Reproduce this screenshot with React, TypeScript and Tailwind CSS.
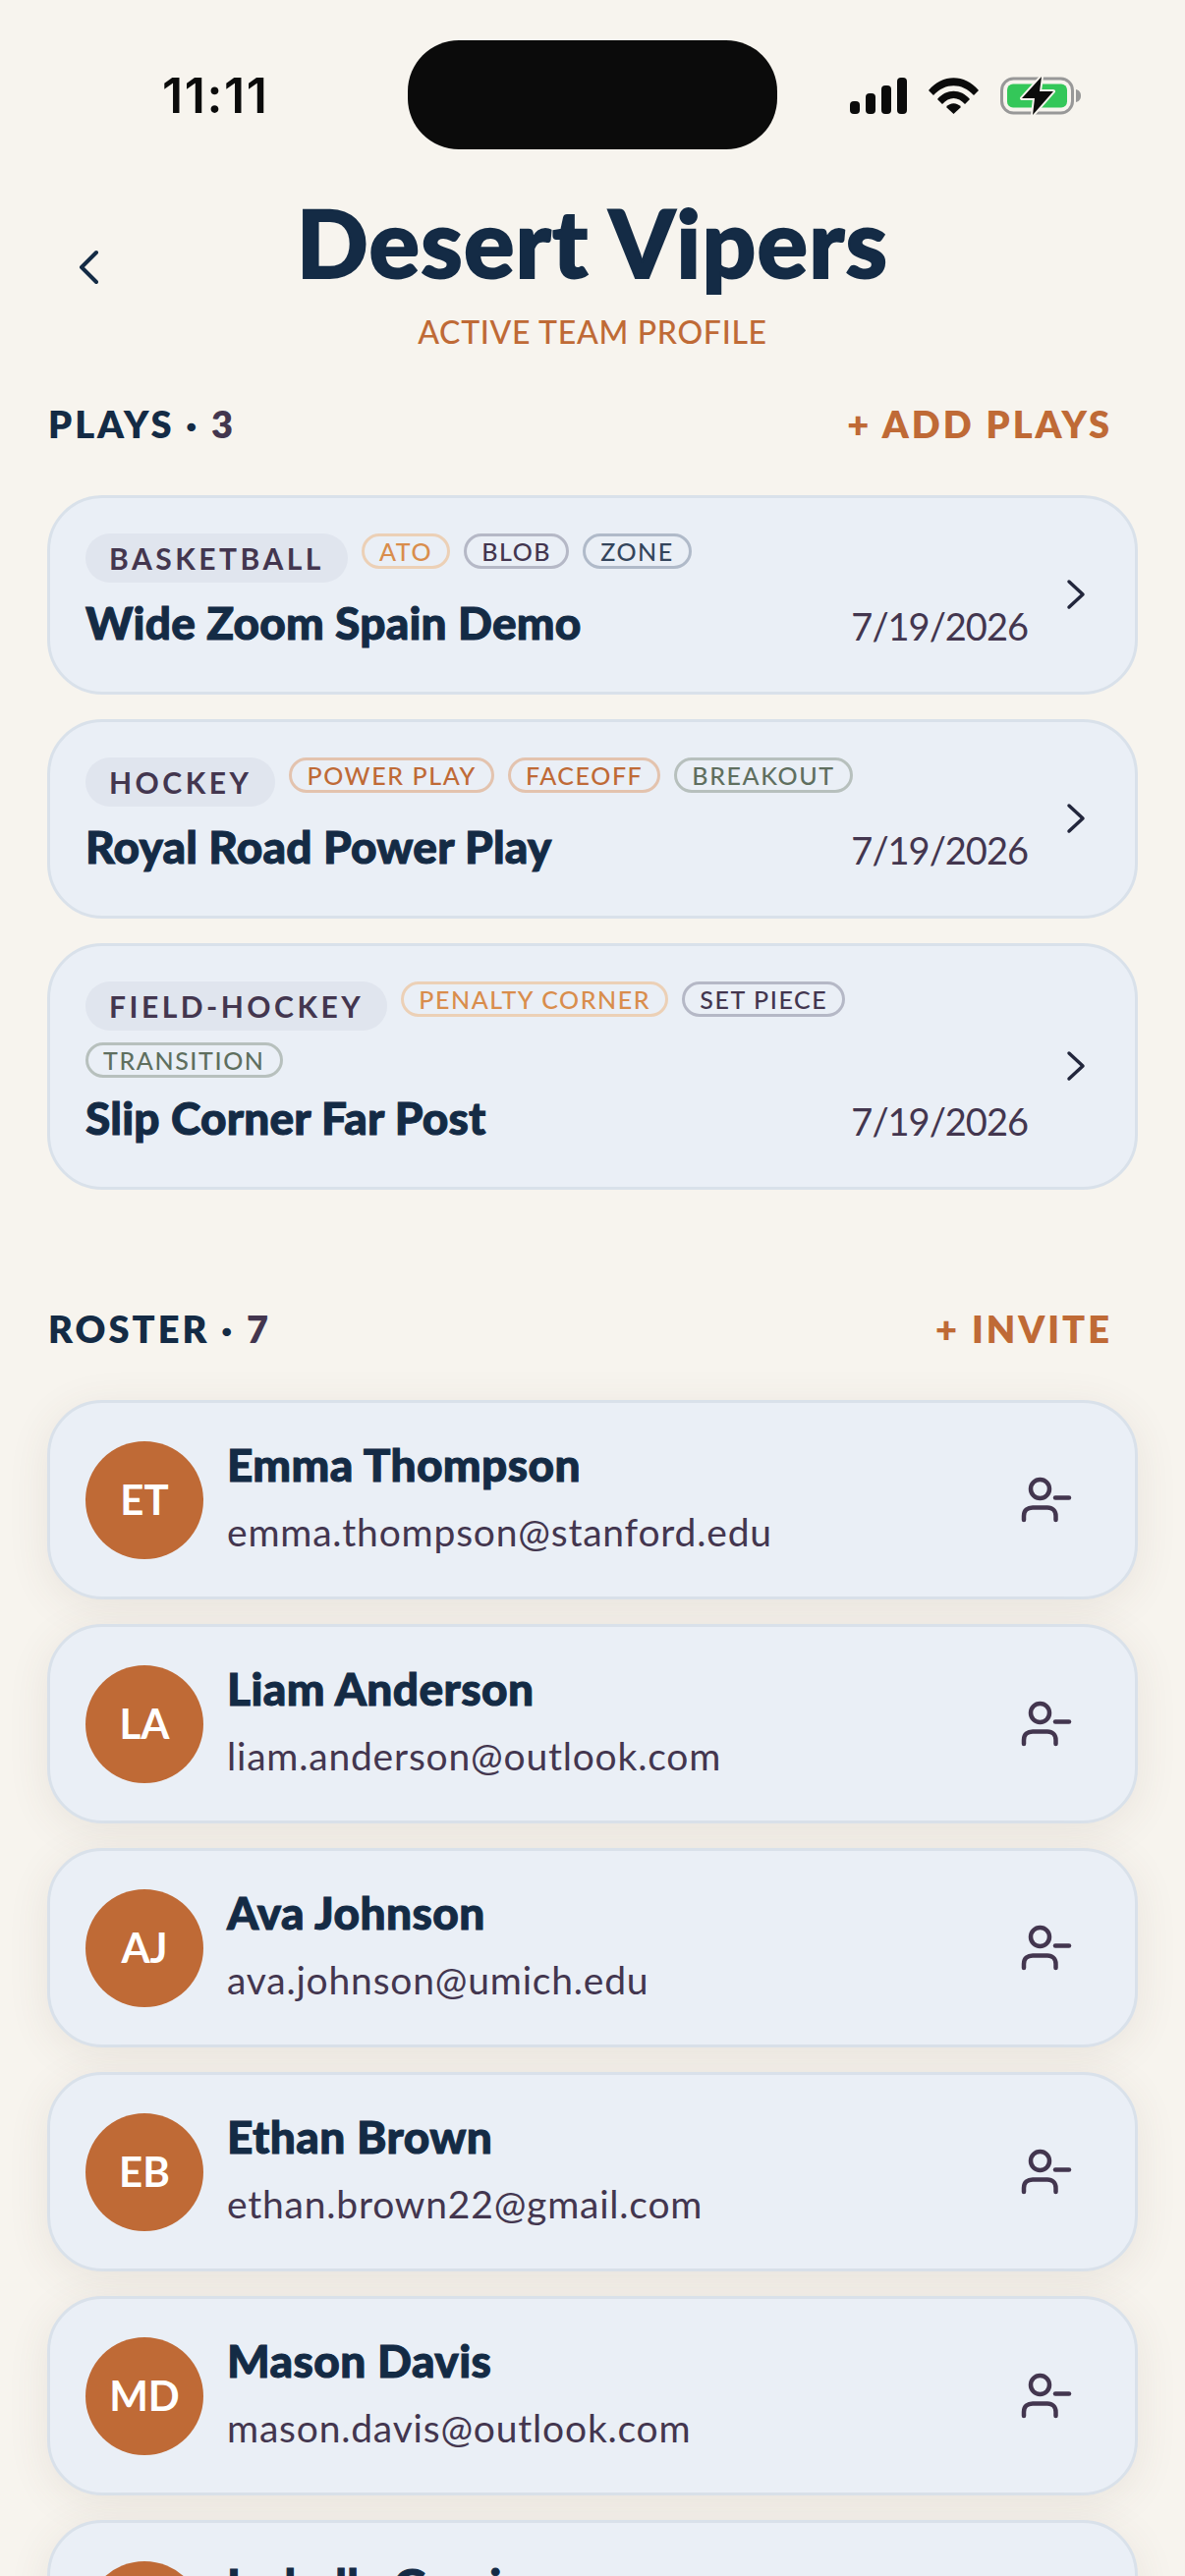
const display = "font-['Lato','Noto_Sans',sans-serif]";
const heavy = "[-webkit-text-stroke:1px_#142b45]";

const plays = [
  {
    sport: "BASKETBALL",
    title: "Wide Zoom Spain Demo",
    tags: [
      { label: "ATO", className: "border-[#ecd0b6] text-[#d98d4c]" },
      { label: "BLOB", className: "border-[#b5b8c6] text-[#43364f]" },
      { label: "ZONE", className: "border-[#b0bac9] text-[#34455c]" },
    ],
  },
  {
    sport: "HOCKEY",
    title: "Royal Road Power Play",
    tags: [
      { label: "POWER PLAY", className: "border-[#e3c3ae] text-[#bf6a36]" },
      { label: "FACEOFF", className: "border-[#e3c3ae] text-[#bf6a36]" },
      { label: "BREAKOUT", className: "border-[#b7c0bd] text-[#5f6f5f]" },
    ],
  },
  {
    sport: "FIELD-HOCKEY",
    title: "Slip Corner Far Post",
    tags: [
      { label: "PENALTY CORNER", className: "border-[#ecd0b6] text-[#d98d4c]" },
      { label: "SET PIECE", className: "border-[#b5b8c6] text-[#43364f]" },
      { label: "TRANSITION", className: "border-[#b7c0bd] text-[#5f6f5f]" },
    ],
  },
];

const roster = [
  { initials: "ET", name: "Emma Thompson", email: "emma.thompson@stanford.edu" },
  { initials: "LA", name: "Liam Anderson", email: "liam.anderson@outlook.com" },
  { initials: "AJ", name: "Ava Johnson", email: "ava.johnson@umich.edu" },
  { initials: "EB", name: "Ethan Brown", email: "ethan.brown22@gmail.com" },
  { initials: "MD", name: "Mason Davis", email: "mason.davis@outlook.com" },
  { initials: "IG", name: "Isabella Garcia", email: "isabella.garcia@gmail.com" },
];

function StatusIcons() {
  return (
    <div className="flex items-center">
      <svg width="58" height="37" viewBox="0 0 58 37" fill="#0b0b0b">
        <rect x="0" y="24" width="10" height="13" rx="4" />
        <rect x="16" y="16" width="10" height="21" rx="4" />
        <rect x="32" y="8" width="10" height="29" rx="4" />
        <rect x="48" y="0" width="10" height="37" rx="4" />
      </svg>
      <svg className="ml-[22px]" width="51" height="37" viewBox="0 0 51 37" fill="#0b0b0b">
        <path d="M0 13 C14 -4 37 -4 51 13 L46 18 C34 5 17 5 5 18Z" />
        <path d="M9 22 C18 11 33 11 42 22 L37 27 C30 19 21 19 14 27Z" />
        <path d="M18 30 C22 25 29 25 33 30 L25.5 37Z" />
      </svg>
      <svg className="ml-[22px]" width="82" height="41" viewBox="0 0 82 41">
        <rect x="1.5" y="3" width="72" height="35" rx="12" fill="none" stroke="#989898" strokeWidth="3" />
        <rect x="7" y="8.5" width="61" height="24" rx="6" fill="#34c759" />
        <path d="M77 14 C81 15 82 18 82 20.5 C82 23 81 26 77 27Z" fill="#989898" />
        <path
          d="M42 1 L22 23 L35 23 L33 40 L54 16 L40 16Z"
          fill="#0b0b0b"
          stroke="#f7f4ee"
          strokeWidth="4"
          strokeLinejoin="round"
          paintOrder="stroke"
        />
      </svg>
    </div>
  );
}

function Chevron({ left = false }: { left?: boolean }) {
  return (
    <svg width="20" height="36" viewBox="0 0 20 36" fill="none" stroke={left ? "#142b45" : "#22263c"} strokeWidth={left ? 4 : 3.5} strokeLinecap="round" strokeLinejoin="round">
      <path d={left ? "M18 3 L3 18 L18 33" : "M3 4 L17 17 L3 30"} />
    </svg>
  );
}

function RemoveIcon() {
  return (
    <svg width="54" height="50" viewBox="0 0 54 50" fill="none" stroke="#43364f" strokeWidth="4.5" strokeLinecap="round">
      <circle cx="20.5" cy="13.5" r="9.5" />
      <path d="M4 45 V41 C4 35 8 32.5 13 32.5 H28 C33 32.5 36.5 36 36.5 41 V45" />
      <path d="M36 22.5 H50" />
    </svg>
  );
}

function SectionHeader({ label, count, action }: { label: string; count: number; action: string }) {
  return (
    <div className={`flex items-center justify-between pl-[1px] pr-[26px] text-[38px] font-extrabold leading-[48px] tracking-[3px] ${display}`}>
      <div className="text-[#142b45]">
        {label} · <span className="text-[#43364f]">{count}</span>
      </div>
      <div className="text-[#bf6a36]">{action}</div>
    </div>
  );
}

export default function App() {
  return (
    <div className="h-[2622px] w-[1206px] overflow-hidden bg-[#f7f4ee]">
      <div className="flex h-[152px] items-start pl-[165px] pr-[106px] pt-[41px]">
        <div className="mt-[28px] w-[250px] font-['Inter',sans-serif] text-[50px] font-semibold leading-[56px] tracking-[1.6px] text-[#0b0b0b]">11:11</div>
        <div className="h-[111px] w-[376px] rounded-[52px] bg-[#0b0b0b]" />
        <div className="ml-auto mt-[36px]">
          <StatusIcons />
        </div>
      </div>

      <header className="relative flex flex-col items-center pt-[38px]">
        <div className="absolute left-[80px] top-[102px]">
          <Chevron left />
        </div>
        <h1 className={`text-[96px] font-black leading-[112px] tracking-[1.2px] text-[#142b45] [-webkit-text-stroke:2px_#142b45] ${display}`}>Desert Vipers</h1>
        <p className={`mt-[16px] text-[32px] font-medium leading-[40px] tracking-[0.7px] text-[#bf6a36] ${display}`}>ACTIVE TEAM PROFILE</p>
      </header>

      <main className="px-[48px] pt-[49px]">
        <SectionHeader label="PLAYS" count={3} action="+ ADD PLAYS" />

        <div className="mt-[49px] flex flex-col gap-[25px]">
          {plays.map((play) => (
            <div key={play.title} className="flex items-center rounded-[56px] border-[3px] border-[#d9e1ea] bg-[#eaeff6] pl-[36px] pr-[50px]">
              <div className="min-w-0 flex-1 pb-[44px] pt-[36px]">
                <div className="flex flex-wrap items-start gap-x-[14px] gap-y-[12px] pr-[38px]">
                  <span className={`rounded-full bg-[#e0e5ee] px-[24px] text-[30px] font-bold leading-[50px] tracking-[3.5px] text-[#43364f] ${display}`}>{play.sport}</span>
                  {play.tags.map((tag) => (
                    <span key={tag.label} className={`rounded-full border-[3px] px-[15px] text-[25px] font-medium leading-[30px] tracking-[1.6px] ${display} ${tag.className}`}>
                      {tag.label}
                    </span>
                  ))}
                </div>
                <div className="mt-[15px] flex items-end justify-between pr-[39px]">
                  <div className={`text-[46px] font-black leading-[52px] tracking-[0.2px] text-[#142b45] ${heavy} ${display}`}>{play.title}</div>
                  <div className={`text-[38px] leading-[46px] tracking-[-1px] text-[#43364f] ${display}`}>7/19/2026</div>
                </div>
              </div>
              <Chevron />
            </div>
          ))}
        </div>

        <div className="mt-[117px]">
          <SectionHeader label="ROSTER" count={7} action="+ INVITE" />
        </div>

        <div className="mt-[49px] flex flex-col gap-[25px]">
          {roster.map((member) => (
            <div
              key={member.email}
              className="flex h-[203px] items-center rounded-[56px] border-[3px] border-[#d9e1ea] bg-[#eaeff6] pl-[36px] pr-[63px] shadow-[0_8px_44px_rgba(90,70,50,0.09)]"
            >
              <div className={`flex h-[120px] w-[120px] shrink-0 items-center justify-center rounded-full bg-[#bf6a36] text-[42px] font-bold text-white ${display}`}>
                {member.initials}
              </div>
              <div className="ml-[24px] min-w-0 flex-1 pb-[6px]">
                <div className={`text-[46px] font-black leading-[52px] tracking-[0.4px] text-[#142b45] ${heavy} ${display}`}>{member.name}</div>
                <div className={`mt-[19px] text-[39px] leading-[46px] tracking-[0.8px] text-[#43364f] ${display}`}>{member.email}</div>
              </div>
              <RemoveIcon />
            </div>
          ))}
        </div>
      </main>
    </div>
  );
}
